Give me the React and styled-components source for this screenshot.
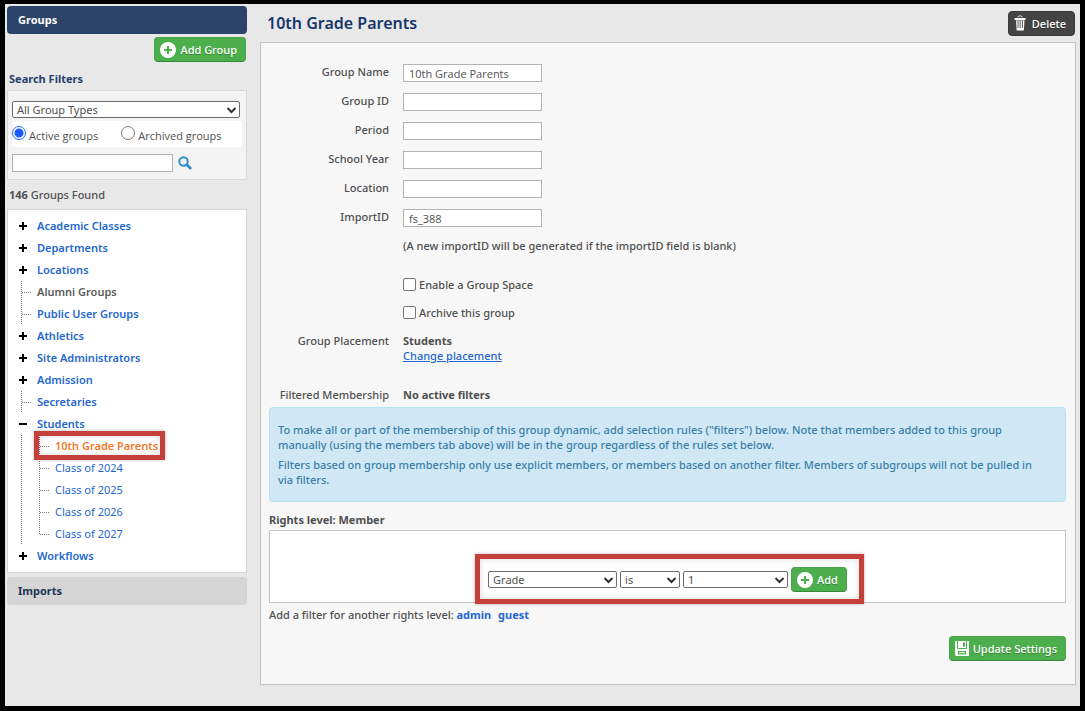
import React from 'react';
import styled, { createGlobalStyle, css } from 'styled-components';

const GlobalStyle = createGlobalStyle`
  * {
    box-sizing: border-box;
  }

  body {
    margin: 0;
    background: #000;
    color: #505050;
    font-family: 'Noto Sans', 'Open Sans', sans-serif;
    font-size: 11px;
    line-height: 15px;
  }

  input,
  select,
  button {
    font-family: inherit;
    font-size: inherit;
    color: inherit;
    margin: 0;
  }
`;

const Page = styled.div`
  display: grid;
  grid-template-columns: 240px minmax(0, 1fr);
  gap: 13px;
  align-items: start;
  min-height: calc(100vh - 9px);
  margin: 4px 5px 5px;
  padding: 2px 4px 20px 2px;
  background: #e8e8e8;
`;

/* sidebar */

const Sidebar = styled.aside`
  display: flex;
  flex-direction: column;
`;

const SectionBar = styled.h2`
  margin: 0;
  padding: 0 11px;
  border-radius: 4px;
  font-size: 11px;
  font-weight: 700;
  line-height: 28px;
  color: ${({ $active }) => ($active ? '#fff' : '#1d3358')};
  background: ${({ $active }) => ($active ? '#2c4469' : '#d5d5d5')};
`;

const ButtonRow = styled.div`
  display: flex;
  justify-content: flex-end;
`;

const AddRow = styled(ButtonRow)`
  padding: 3px 1px 0 0;
`;

const Button = styled.button`
  display: flex;
  align-items: center;
  gap: 4px;
  height: 25px;
  padding: 0 8px 0 5px;
  border: 1px solid #47a447;
  border-bottom-color: #358a36;
  border-radius: 4px;
  background: #4cae4c;
  color: #fff;
  font-weight: 500;
  white-space: nowrap;
  text-shadow: 0 1px 0 rgba(0, 0, 0, 0.25);
  cursor: pointer;

  ${({ $dark }) =>
    $dark &&
    css`
      gap: 6px;
      border-color: #3a3a3a;
      background: #444;
    `}
`;

const FilterTitle = styled.h3`
  margin: 9px 0 4px;
  padding: 0 2px;
  font-size: 11px;
  font-weight: 700;
  line-height: 15px;
  color: #26406e;
`;

const FilterBox = styled.section`
  display: flex;
  flex-direction: column;
  padding: 10px 4px 7px;
  border: 1px solid #d9d9d9;
  background: #f3f3f3;
`;

const SelectWrap = styled.span`
  display: inline-grid;
  align-items: center;
  width: ${({ $width }) => $width};

  select,
  svg {
    grid-area: 1 / 1;
  }

  svg {
    justify-self: end;
    margin-right: 3px;
    pointer-events: none;
  }
`;

const SelectBox = styled.select`
  appearance: none;
  width: 100%;
  height: 17px;
  padding: 0 18px 0 4px;
  border: 1px solid #6b6b6b;
  border-radius: 2px;
  background: #fff;
  line-height: 15px;
`;

const RadioRow = styled.div`
  display: flex;
  gap: 23px;
  height: 26px;
  margin: 3px 0 7px;
  background: #fff;
`;

const RadioLabel = styled.label`
  display: flex;
  align-items: flex-start;
  gap: 3px;
  padding-top: 5px;
  font-family: 'Open Sans', sans-serif;

  span {
    padding-top: 2px;
  }
`;

const Radio = styled.input`
  appearance: none;
  width: 14px;
  height: 14px;
  border: 1px solid #777;
  border-radius: 50%;
  background: #fff;

  &:checked {
    border-color: #1f66f2;
    background: radial-gradient(circle, #1f5cff 4px, #fff 5px);
  }
`;

const SearchRow = styled.div`
  display: flex;
  align-items: center;
  gap: 5px;
`;

const IconButton = styled.button`
  display: flex;
  padding: 0;
  border: 0;
  background: none;
`;

const TextInput = styled.input`
  width: ${({ $width }) => $width};
  height: 18px;
  padding: 0 5px;
  border: 1px solid #b3b3b3;
  border-radius: 0;
  background: #fff;
  font-family: 'Open Sans', sans-serif;
`;

const Found = styled.p`
  margin: 7px 0 6px;
  padding: 0 2px;
  font-weight: 500;
  line-height: 16px;
`;

const Tree = styled.ul`
  margin: 0 0 4px;
  padding: 5px 11px;
  border: 1px solid #d5d5d5;
  background: #fff;
  list-style: none;
`;

const TreeRow = styled.li`
  display: flex;
  height: 22px;
  line-height: 22px;
`;

const TreeLink = styled.a`
  font-weight: ${({ $child, $current }) => ($child && !$current ? 400 : 600)};
  color: ${({ $current, $muted }) => {
    if ($current) return '#f4792b';
    return $muted ? '#5a5a5a' : '#2467cf';
  }};
  text-decoration: none;
`;

/* red callout drawn over whatever it surrounds */
const callout = css`
  position: relative;

  &::after {
    content: '';
    position: absolute;
    border: 5px solid #c5403b;
    box-shadow: 0 0 3px rgba(0, 0, 0, 0.3), inset 0 0 6px rgba(0, 0, 0, 0.15);
    pointer-events: none;
  }
`;

const CurrentMark = styled.span`
  ${callout}

  &::after {
    inset: -4px -7px -3px -21px;
  }
`;

/* main column */

const Main = styled.main`
  min-width: 0;
`;

const Header = styled.header`
  display: flex;
  align-items: center;
  justify-content: space-between;
  height: 36px;
  padding: 0 1px 2px 7px;
`;

const Title = styled.h1`
  margin: 0;
  font-size: 16px;
  font-weight: 600;
  line-height: 22px;
  color: #17366b;
`;

const Panel = styled.form`
  padding: 21px 9px 23px 8px;
  border: 1px solid #c4c4c4;
  background: #f7f7f7;
  font-weight: 500;
`;

const Fields = styled.div`
  display: grid;
  grid-template-columns: 120px minmax(0, 1fr);
  column-gap: 14px;
`;

const FieldLabel = styled.label`
  text-align: right;
  white-space: nowrap;
`;

const Field = styled.div`
  grid-column: 2;
  min-height: ${({ $height }) => $height || 29}px;
`;

const CheckLabel = styled.label`
  display: flex;
  align-items: center;
  gap: 3px;
  height: 15px;
`;

const Checkbox = styled.input`
  appearance: none;
  width: 13px;
  height: 13px;
  border: 1px solid #767676;
  border-radius: 2px;
  background: #fff;

  &:checked {
    background: #1f5cff;
  }
`;

const Link = styled.a`
  color: #2467cf;
`;

const StrongLink = styled(Link)`
  margin-right: 4px;
  font-weight: 700;
  text-decoration: none;
`;

const Info = styled.div`
  min-height: 95px;
  padding: 14px 24px 9px 8px;
  border: 1px solid #b4e2ef;
  border-radius: 4px;
  background: #d0e8f6;
  color: #3a7fa6;

  p {
    margin: 0 0 5px;
  }
`;

const RightsTitle = styled.h3`
  margin: 10px 0 3px;
  font-size: 11px;
  line-height: 15px;
`;

const RuleBox = styled.div`
  display: flex;
  justify-content: center;
  padding: 36px 0 10px;
  border: 1px solid #c4c4c4;
  background: #fff;
`;

const Rule = styled.div`
  ${callout}
  display: flex;
  align-items: center;
  gap: 3px;

  &::after {
    inset: -13px -17px -12px -13px;
  }
`;

const Note = styled.p`
  margin: 4px 0 14px;
`;

const PlusIcon = () => (
  <svg width="16" height="16" viewBox="0 0 16 16" aria-hidden="true">
    <circle cx="8" cy="8" r="8" fill="#fff" />
    <path d="M8 4v8M4 8h8" stroke="#4cae4c" strokeWidth="2" />
  </svg>
);

const TrashIcon = () => (
  <svg width="12" height="16" viewBox="0 0 12 16" aria-hidden="true">
    <path d="M3.500 1.800Q6 -0.400 8.500 1.800" fill="none" stroke="#ddd" />
    <path d="M0.500 3h11v2h-11zM2 5.500h8.500l-0.700 10H2.700z" fill="#fff" />
    <path d="M4 6v7M6.200 6v7M8.400 6v7" stroke="#444" strokeWidth="0.900" />
  </svg>
);

const SaveIcon = () => (
  <svg width="14" height="15" viewBox="0 0 14 15" aria-hidden="true">
    <path d="M0 0h14v15H1l-1-1z" fill="#fff" />
    <path d="M2.500 0v7.500h9V0" fill="none" stroke="#4cae4c" />
    <path d="M8 1.500h2v4H8zM3 10h8v3.500H3z" fill="#4cae4c" />
    <path d="M4 11.700h6" stroke="#fff" />
  </svg>
);

const SearchIcon = () => (
  <svg width="14" height="14" viewBox="0 0 14 14" aria-hidden="true">
    <circle cx="5.500" cy="5.500" r="4.200" fill="none" stroke="#2c90c4" strokeWidth="2" />
    <path d="M8.800 8.800l3.400 3.200" stroke="#2c90c4" strokeWidth="2.800" strokeLinecap="round" />
  </svg>
);

const Chevron = () => (
  <svg width="11" height="8" viewBox="0 0 11 8" aria-hidden="true">
    <path d="M1.500 2l4 4 4-4" fill="none" stroke="#333" strokeWidth="2" />
  </svg>
);

const markPaths = {
  plus: <path d="M4 7v8M0 11h8" stroke="#000" strokeWidth="2" />,
  minus: <path d="M0 11h8" stroke="#000" strokeWidth="2" />,
  line: <path d="M2.500 0v22" stroke="#777" strokeDasharray="1 1" />,
  branch: <path d="M2.500 0v22M3 11.500h10" stroke="#777" strokeDasharray="1 1" />,
  end: <path d="M2.500 0v12M3 11.500h10" stroke="#777" strokeDasharray="1 1" />,
};

const Mark = ({ type }) => (
  <svg width="18" height="22" viewBox="0 0 18 22" aria-hidden="true">
    {markPaths[type]}
  </svg>
);

const groups = [
  { name: 'Academic Classes', marks: ['plus'] },
  { name: 'Departments', marks: ['plus'] },
  { name: 'Locations', marks: ['plus'] },
  { name: 'Alumni Groups', marks: ['branch'], muted: true },
  { name: 'Public User Groups', marks: ['branch'] },
  { name: 'Athletics', marks: ['plus'] },
  { name: 'Site Administrators', marks: ['plus'] },
  { name: 'Admission', marks: ['plus'] },
  { name: 'Secretaries', marks: ['branch'] },
  { name: 'Students', marks: ['minus'] },
  { name: '10th Grade Parents', marks: ['line', 'branch'], current: true },
  { name: 'Class of 2024', marks: ['line', 'branch'] },
  { name: 'Class of 2025', marks: ['line', 'branch'] },
  { name: 'Class of 2026', marks: ['line', 'branch'] },
  { name: 'Class of 2027', marks: ['line', 'end'] },
  { name: 'Workflows', marks: ['plus'] },
];

const fields = [
  { id: 'name', label: 'Group Name', value: '10th Grade Parents' },
  { id: 'groupId', label: 'Group ID' },
  { id: 'period', label: 'Period' },
  { id: 'year', label: 'School Year' },
  { id: 'location', label: 'Location' },
  { id: 'importId', label: 'ImportID', value: 'fs_388' },
];

function Select({ width, label, options }) {
  return (
    <SelectWrap $width={width}>
      <SelectBox aria-label={label}>
        {options.map((option) => (
          <option key={option}>{option}</option>
        ))}
      </SelectBox>
      <Chevron />
    </SelectWrap>
  );
}

function GroupRow({ group }) {
  const link = (
    <TreeLink
      href="#"
      $child={group.marks.length > 1}
      $current={group.current}
      $muted={group.muted}
    >
      {group.name}
    </TreeLink>
  );

  return (
    <TreeRow>
      {group.marks.map((type, i) => (
        <Mark key={i} type={type} />
      ))}
      {group.current ? <CurrentMark>{link}</CurrentMark> : link}
    </TreeRow>
  );
}

function App() {
  return (
    <>
      <GlobalStyle />
      <Page>
        <Sidebar>
          <SectionBar $active>Groups</SectionBar>
          <AddRow>
            <Button type="button">
              <PlusIcon /> Add Group
            </Button>
          </AddRow>
          <FilterTitle>Search Filters</FilterTitle>
          <FilterBox>
            <Select width="228px" label="Group type" options={['All Group Types']} />
            <RadioRow>
              <RadioLabel>
                <Radio type="radio" name="status" defaultChecked />
                <span>Active groups</span>
              </RadioLabel>
              <RadioLabel>
                <Radio type="radio" name="status" />
                <span>Archived groups</span>
              </RadioLabel>
            </RadioRow>
            <SearchRow>
              <TextInput $width="161px" aria-label="Search groups" />
              <IconButton type="button" aria-label="Search">
                <SearchIcon />
              </IconButton>
            </SearchRow>
          </FilterBox>
          <Found>
            <b>146</b> Groups Found
          </Found>
          <Tree>
            {groups.map((group) => (
              <GroupRow key={group.name} group={group} />
            ))}
          </Tree>
          <SectionBar>Imports</SectionBar>
        </Sidebar>

        <Main>
          <Header>
            <Title>10th Grade Parents</Title>
            <Button type="button" $dark>
              <TrashIcon /> Delete
            </Button>
          </Header>
          <Panel>
            <Fields>
              {fields.map(({ id, label, value }) => (
                <React.Fragment key={id}>
                  <FieldLabel htmlFor={id}>{label}</FieldLabel>
                  <Field>
                    <TextInput id={id} $width="139px" defaultValue={value} />
                  </Field>
                </React.Fragment>
              ))}
              <Field $height={39}>
                (A new importID will be generated if the importID field is blank)
              </Field>
              <Field $height={28}>
                <CheckLabel>
                  <Checkbox type="checkbox" /> Enable a Group Space
                </CheckLabel>
              </Field>
              <Field $height={28}>
                <CheckLabel>
                  <Checkbox type="checkbox" /> Archive this group
                </CheckLabel>
              </Field>
              <FieldLabel as="span">Group Placement</FieldLabel>
              <Field $height={54}>
                <b>Students</b>
                <br />
                <Link href="#">Change placement</Link>
              </Field>
              <FieldLabel as="span">Filtered Membership</FieldLabel>
              <Field $height={20}>
                <b>No active filters</b>
              </Field>
            </Fields>
            <Info>
              <p>
                To make all or part of the membership of this group dynamic, add selection rules
                ("filters") below. Note that members added to this group manually (using the members
                tab above) will be in the group regardless of the rules set below.
              </p>
              <p>
                Filters based on group membership only use explicit members, or members based on
                another filter. Members of subgroups will not be pulled in via filters.
              </p>
            </Info>
            <RightsTitle>Rights level: Member</RightsTitle>
            <RuleBox>
              <Rule>
                <Select width="129px" label="Field" options={['Grade']} />
                <Select width="60px" label="Operator" options={['is']} />
                <Select width="105px" label="Value" options={['1']} />
                <Button type="button">
                  <PlusIcon /> Add
                </Button>
              </Rule>
            </RuleBox>
            <Note>
              Add a filter for another rights level: <StrongLink href="#">admin</StrongLink>{' '}
              <StrongLink href="#">guest</StrongLink>
            </Note>
            <ButtonRow>
              <Button type="button">
                <SaveIcon /> Update Settings
              </Button>
            </ButtonRow>
          </Panel>
        </Main>
      </Page>
    </>
  );
}

export default App;
